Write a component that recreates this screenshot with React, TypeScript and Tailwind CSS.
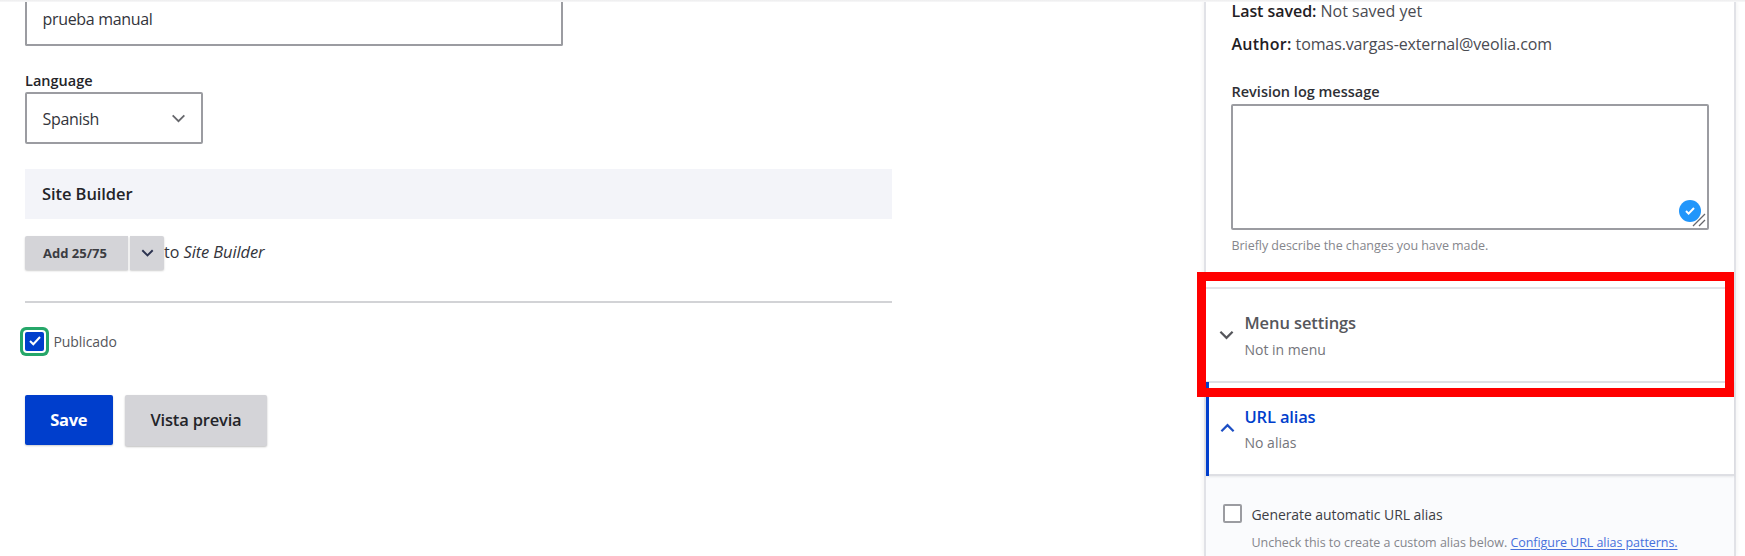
import React from "react";

type ChevronProps = { className: string; up?: boolean; weight?: number };

function Chevron({ className, up = false, weight = 2 }: ChevronProps) {
  return (
    <svg viewBox="0 0 16 10" fill="none" stroke="currentColor" strokeWidth={weight} className={className}>
      <path d={up ? "M1.5 8.5 8 2l6.5 6.5" : "M1.5 1.5 8 8l6.5-6.5"} />
    </svg>
  );
}

function EditForm() {
  return (
    <main className="flex w-[867px] shrink-0 flex-col">
      <div className="h-[45.5px] w-[537.5px] rounded-b-[2px] border-2 border-t-0 border-[#9b9ca1] bg-white pt-[7px] pl-[15.5px] text-base leading-6 tracking-[-0.32px] text-[#33343b]">
        prueba manual
      </div>

      <label className="mt-[25.5px] text-[14.5px] leading-5 font-semibold text-[#232429]">Language</label>
      <div className="mt-px flex h-[52px] w-[178px] items-center justify-between rounded-[2px] border-2 border-[#9b9ca1] bg-white pr-[15px] pl-[15.5px] text-base leading-6 tracking-[-0.32px] text-[#33343b]">
        <span className="pt-px">Spanish</span>
        <Chevron className="h-[9px] w-[15px] text-[#66676c]" />
      </div>

      <div className="mt-[25px] flex h-[50px] items-center bg-[#f3f4f9] pl-[17px] text-[16.5px] leading-6 font-semibold tracking-[-0.08px] text-[#232429]">
        Site Builder
      </div>

      <div className="mt-[17px] flex h-[34px] items-start">
        <button className="flex h-[34px] w-[103px] items-center justify-center rounded-l-[2px] bg-[#d4d4d8] pr-[3px] text-[13px] leading-none font-bold text-[#3b3c42] shadow-[0_1px_2px_rgba(0,0,0,0.2)]">
          Add 25/75
        </button>
        <button className="ml-0.5 flex h-[34px] w-[34px] items-center justify-center rounded-r-[2px] bg-[#d4d4d8] text-[#2c3350] shadow-[0_1px_2px_rgba(0,0,0,0.2)]">
          <Chevron className="h-[8px] w-[13px]" weight={2.4} />
        </button>
        <p className="pt-1 text-base leading-6 text-[#33343b]">
          to <em className="text-[16.5px] tracking-[-0.12px]">Site Builder</em>
        </p>
      </div>

      <hr className="mt-[31px] border-0 border-t-2 border-[#d2d3d6]" />

      <div className="mt-[28px] flex h-5 items-center">
        <span className="flex size-[19px] items-center justify-center rounded-[2px] bg-[#003ecc] shadow-[0_0_0_2px_#ffffff,0_0_0_5px_#26a769]">
          <svg viewBox="0 0 12 10" fill="none" stroke="white" strokeWidth="2" className="h-[10px] w-3">
            <path d="m1 5 3.3 3.3L11 1" />
          </svg>
        </span>
        <span className="pt-px pl-[9.5px] text-sm leading-5 tracking-[-0.08px] text-[#55565b]">Publicado</span>
      </div>

      <div className="mt-11 flex gap-[12.5px]">
        <button className="h-[50px] w-[87.5px] rounded-[2px] bg-[#003ecc] text-[16.5px] leading-6 font-bold tracking-[-0.3px] text-white shadow-[0_1px_2px_rgba(0,0,0,0.2)]">Save</button>
        <button className="h-[51px] w-[142px] rounded-[2px] bg-[#d4d4d8] pb-px text-[16.5px] leading-6 font-semibold tracking-[-0.18px] text-[#232429] shadow-[0_1px_2px_rgba(0,0,0,0.25)]">Vista previa</button>
      </div>
    </main>
  );
}

function Sidebar() {
  return (
    <aside className="ml-[312px] flex h-full w-[532px] shrink-0 flex-col border-x-2 border-[#e1e2e7] bg-white shadow-[0_0_5px_rgba(0,0,0,0.07)]">
      <section className="flex h-[287px] shrink-0 flex-col px-[25px]">
        <p className="-mt-px pl-[0.5px] text-base leading-6 text-[#4a4b52]">
          <b className="font-semibold tracking-[-0.05px] text-[#1f2024]">Last saved:</b> Not saved yet
        </p>
        <p className="mt-[9px] pl-[0.5px] text-base leading-6 tracking-[-0.12px] text-[#4a4b52]">
          <b className="font-semibold tracking-[0.25px] text-[#1f2024]">Author:</b> tomas.vargas-external@veolia.com
        </p>
        <label className="mt-[26px] pl-[0.5px] text-[14.5px] leading-5 font-semibold text-[#2e2f35]">Revision log message</label>
        <div className="relative mt-[2px] h-[126px] w-[478px] shrink-0 rounded-[2px] border-2 border-[#9b9ca1] bg-white">
          <span className="absolute right-[6px] bottom-[6px] flex size-[22px] items-center justify-center rounded-full bg-[#2196fb]">
            <svg viewBox="0 0 10 8" fill="none" stroke="white" strokeWidth="2" className="h-2 w-[10px]">
              <path d="m1 4 2.6 2.6L9 1" />
            </svg>
          </span>
          <svg viewBox="0 0 14 14" fill="none" stroke="#66676c" strokeWidth="1.3" className="absolute right-px bottom-px size-[14px]">
            <path d="M1 13 13 1M7 13l6-6" />
          </svg>
        </div>
        <p className="mt-[7px] pl-[0.5px] text-[12.5px] leading-[18px] tracking-[-0.05px] text-[#85868c]">Briefly describe the changes you have made.</p>
      </section>

      <section className="flex h-[94px] shrink-0 items-start border-t-2 border-[#e3e3e8] pl-[13px]">
        <Chevron className="mt-[41px] h-[10px] w-[15px] text-[#55565b]" weight={2.4} />
        <div className="pt-[22px] pl-[10.5px]">
          <h3 className="text-[16.5px] leading-6 font-semibold tracking-[-0.1px] text-[#55565b]">Menu settings</h3>
          <p className="mt-[5px] text-sm leading-5 text-[#74757b]">Not in menu</p>
        </div>
      </section>

      <section className="relative flex h-[95px] shrink-0 items-start border-y-2 border-[#dedfe4] bg-white pl-[14px] shadow-[0_1px_2px_rgba(0,0,0,0.08)]">
        <span className="absolute -top-px -bottom-0.5 left-0 w-[3px] bg-[#003ecc]" />
        <Chevron up className="mt-[40px] h-[10px] w-[15px] text-[#1d4fc4]" weight={2.4} />
        <div className="pt-[22px] pl-[9.5px]">
          <h3 className="text-[16.5px] leading-6 font-semibold tracking-[-0.16px] text-[#003ecc]">URL alias</h3>
          <p className="mt-1 text-sm leading-5 text-[#74757b]">No alias</p>
        </div>
      </section>

      <section className="flex flex-1 items-start bg-[#fafbfd] pt-[28px] pl-[17px]">
        <span className="size-[19px] shrink-0 rounded-[2px] border-2 border-[#9b9ca1] bg-white" />
        <div className="pt-px pl-[9.5px]">
          <p className="text-sm leading-5 tracking-[-0.07px] text-[#3d3e45]">Generate automatic URL alias</p>
          <p className="mt-[9px] text-[12.5px] leading-[18px] tracking-[-0.03px] whitespace-nowrap text-[#85868c]">
            Uncheck this to create a custom alias below.{" "}
            <a className="tracking-[-0.06px] text-[#4770dc] underline underline-offset-2">Configure URL alias patterns.</a>
          </p>
        </div>
      </section>
    </aside>
  );
}

export default function App() {
  return (
    <div className="relative flex h-[556px] w-[1745px] items-start overflow-hidden bg-white pl-[25px] font-['Open_Sans','Noto_Sans',sans-serif]">
      <EditForm />
      <Sidebar />
      <div className="absolute inset-x-0 top-0 h-0.5 bg-linear-to-b from-[#ededee] to-[#f8f8f9]" />
      <div className="absolute top-[272px] left-[1197px] h-[125px] w-[537px] border-[9px] border-[#ff0000]" />
    </div>
  );
}
